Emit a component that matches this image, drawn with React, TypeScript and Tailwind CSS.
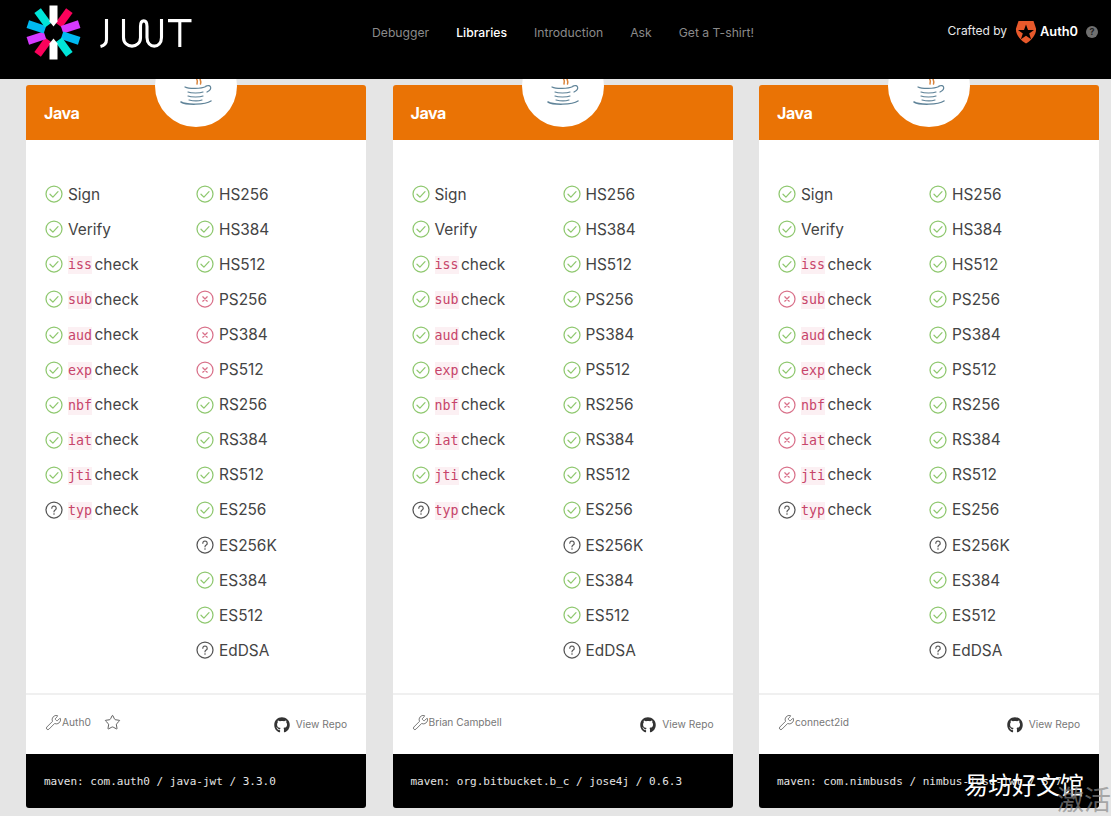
import { Star, Wrench } from "lucide-react";
import { FaGithub } from "react-icons/fa";

type S = "y" | "x" | "q";

function StatusIcon({ s }: { s: S }) {
  const c = s === "y" ? "#8fc86f" : s === "x" ? "#d9718a" : "#555555";
  return (
    <svg width="18" height="18" viewBox="0 0 18 18" fill="none" className="shrink-0">
      <circle cx="9" cy="9" r="8" stroke={c} strokeWidth="1.25" />
      {s === "y" && <path d="M5 9.2l2.9 2.9L13 6.6" stroke={c} strokeWidth="1.25" strokeLinecap="round" strokeLinejoin="round" />}
      {s === "x" && <path d="M6.8 6.8l4.4 4.4M11.2 6.8l-4.4 4.4" stroke={c} strokeWidth="1.25" strokeLinecap="round" />}
      {s === "q" && (
        <>
          <path d="M6.8 7.2a2.2 2.2 0 1 1 3.4 1.9c-.8.5-1.2.9-1.2 1.7" stroke={c} strokeWidth="1.2" strokeLinecap="round" />
          <circle cx="9" cy="13" r=".8" fill={c} />
        </>
      )}
    </svg>
  );
}

function Row({ s, children }: { s: S; children: React.ReactNode }) {
  return (
    <div className="flex h-[35.1px] items-center gap-[5px] text-[15.4px] text-[#444444]">
      <StatusIcon s={s} />
      <span className="flex items-center whitespace-nowrap">{children}</span>
    </div>
  );
}

function Claim({ name }: { name: string }) {
  return (
    <>
      <code className="mr-[2.5px] translate-y-px bg-[#fcf0f3] font-['DejaVu_Sans_Mono',monospace] text-[13.3px] leading-[18px] text-[#c7446a]">{name}</code>
      check
    </>
  );
}

function JwtLogo() {
  const spokes = [
    { a: 36, c: "#fb015b" },
    { a: 72, c: "#d63aff" },
    { a: 108, c: "#00b9f1" },
    { a: 144, c: "#00e5d8" },
    { a: 216, c: "#fb015b" },
    { a: 252, c: "#d63aff" },
    { a: 288, c: "#00b9f1" },
    { a: 324, c: "#00e5d8" },
  ];
  return (
    <svg width="170" height="60" viewBox="0 0 170 60" className="shrink-0" fill="none">
      <g transform="translate(27.5 27.5)">
        {spokes.map((p) => (
          <rect key={p.a} x="-4" y="-27" width="8" height="18" fill={p.c} transform={`rotate(${p.a})`} />
        ))}
        <path d="M-4-27H4V-11L0-6-4-11Z" fill="#fff" />
        <path d="M-4 27H4V11L0 6-4 11Z" fill="#fff" />
      </g>
      <g stroke="#fff" strokeWidth="3.1" fill="none" transform="translate(0 -5)">
        <path d="M80.5 19V39.5c0 3.8-2 6-6 7" />
        <path d="M97.5 19V37.5c0 11.5 17 11.5 17 0V26.5c0-7.5 6.5-7.5 6.5 0V37.5c0 11.5 14.5 11.5 14.5 0V19" />
        <path d="M142 20.6H165.5M153.8 20.6V47" />
      </g>
    </svg>
  );
}

function Auth0Logo() {
  return (
    <svg width="22" height="24" viewBox="0 0 22 24" className="shrink-0">
      <path d="M3.5 1H18.5L21 8.5C21.6 14 17 20 11 23.5 5 20 .4 14 1 8.5Z" fill="#e8592b" />
      <path d="M11 4.5l2 5.6h6l-4.8 3.5 1.9 5.6-5.1-3.5-5.1 3.5 1.9-5.6-4.8-3.5h6Z" fill="#000" />
    </svg>
  );
}

function JavaCup() {
  return (
    <svg width="44" height="44" viewBox="0 0 44 44" fill="none">
      <path d="M22 3c-3 4 3 6 1 12M26 6c-2 3 2 5 .5 9" stroke="#d9833a" strokeWidth="1.5" strokeLinecap="round" />
      <g stroke="#5f8398" strokeWidth="1.2" strokeLinecap="round">
        <path d="M11 18c4 2 16 2 21-.5" />
        <path d="M32 17c5-2 7 3 1 6" />
        <path d="M14 23c3 1.3 12 1.3 15 0" />
        <path d="M14 27c3 1.3 12 1.3 15 0" />
        <path d="M15 31c4 1 10 1 13 0" />
        <path d="M7 33c5 3 24 3 30-1" strokeWidth="1.5" />
      </g>
    </svg>
  );
}

const leftNames = ["iss", "sub", "aud", "exp", "nbf", "iat", "jti", "typ"];
const algos = ["HS256", "HS384", "HS512", "PS256", "PS384", "PS512", "RS256", "RS384", "RS512", "ES256", "ES256K", "ES384", "ES512", "EdDSA"];

const cards = [
  {
    left: { typ: "q" } as Record<string, S>,
    right: { PS256: "x", PS384: "x", PS512: "x", ES256K: "q", EdDSA: "q" } as Record<string, S>,
    by: "Auth0",
    star: true,
    code: "maven: com.auth0 / java-jwt / 3.3.0",
  },
  {
    left: { typ: "q" } as Record<string, S>,
    right: { ES256K: "q", EdDSA: "q" } as Record<string, S>,
    by: "Brian Campbell",
    star: false,
    code: "maven: org.bitbucket.b_c / jose4j / 0.6.3",
  },
  {
    left: { sub: "x", nbf: "x", iat: "x", jti: "x", typ: "q" } as Record<string, S>,
    right: { ES256K: "q", EdDSA: "q" } as Record<string, S>,
    by: "connect2id",
    star: false,
    code: "maven: com.nimbusds / nimbus-jose-jwt / 5.7",
  },
];

export default function App() {
  return (
    <div className="relative h-[816px] overflow-hidden bg-[#e5e5e5] font-['Inter',sans-serif]">
      <header className="relative z-20 flex h-[79px] items-start bg-black pl-[26px] pr-[13px]">
        <div className="mt-[5px] w-[346px]">
          <JwtLogo />
        </div>
        <nav className="mt-[25px] flex gap-[27px] text-[12.2px] leading-[16px] text-[#8a8a8a]">
          <span>Debugger</span>
          <span className="font-medium text-white">Libraries</span>
          <span>Introduction</span>
          <span>Ask</span>
          <span>Get a T-shirt!</span>
        </nav>
        <div className="ml-auto mt-[20px] flex items-center text-[12px] text-[#e8e8e8]">
          <span className="mr-[8px] -translate-y-px">Crafted by</span>
          <Auth0Logo />
          <span className="ml-[3px] text-[12.8px] font-semibold text-white">Auth0</span>
          <span className="ml-[8px] flex h-[12px] w-[12px] items-center justify-center rounded-full bg-[#707070] text-[9px] font-bold text-[#222222]">?</span>
        </div>
      </header>

      <main className="mt-[6px] grid w-[1099px] grid-cols-3 gap-[26.5px] pl-[26px]">
        {cards.map((card, i) => (
          <article key={i} className="relative flex h-[723px] flex-col">
            <div className="flex h-[55px] items-center rounded-t-[3px] bg-[#ea7305] pl-[18px] text-[16px] font-bold tracking-[-0.4px] text-white">Java</div>
            <div className="absolute left-[129px] top-[-40px] z-10 flex h-[82px] w-[82px] items-end justify-center rounded-full bg-white pb-[14px]">
              <JavaCup />
            </div>
            <div className="flex h-[553px] bg-white pl-[19px] pt-[36.6px]">
              <div className="w-[151px]">
                <Row s="y">Sign</Row>
                <Row s="y">Verify</Row>
                {leftNames.map((n) => (
                  <Row key={n} s={card.left[n] ?? "y"}>
                    <Claim name={n} />
                  </Row>
                ))}
              </div>
              <div>
                {algos.map((n) => (
                  <Row key={n} s={card.right[n] ?? "y"}>
                    {n}
                  </Row>
                ))}
              </div>
            </div>
            <div className="flex h-[61px] items-center border-t-2 border-[#f0f0f0] bg-white px-[19px] text-[10.2px] text-[#777777]">
              <Wrench size={17} strokeWidth={1.1} className="-translate-y-[2px] text-[#555555]" />
              <span className="-translate-y-[2px]">{card.by}</span>
              {card.star && <Star size={17} strokeWidth={1.2} className="ml-[13px] -translate-y-[2px] text-[#444444]" />}
              <span className="ml-auto flex items-center gap-[6px]">
                <FaGithub size={16} className="text-[#333333]" />
                View Repo
              </span>
            </div>
            <div className="flex h-[54px] items-center overflow-hidden whitespace-nowrap rounded-b-[3px] bg-black pl-[18px] pt-[3px] font-['DejaVu_Sans_Mono',monospace] text-[11px] text-[#e4e4e4]">
              {card.code}
            </div>
          </article>
        ))}
      </main>

      <div className="absolute left-[964px] top-[767px] z-30 whitespace-nowrap font-['Noto_Sans_CJK_SC',sans-serif] text-[24px] leading-[34px] text-white">易坊好文馆</div>
      <div className="absolute left-[1057px] top-[780px] z-30 whitespace-nowrap font-['Noto_Sans_CJK_SC',sans-serif] text-[27px] leading-[38px] text-[#8a8a8a]/70">激活</div>
    </div>
  );
}
